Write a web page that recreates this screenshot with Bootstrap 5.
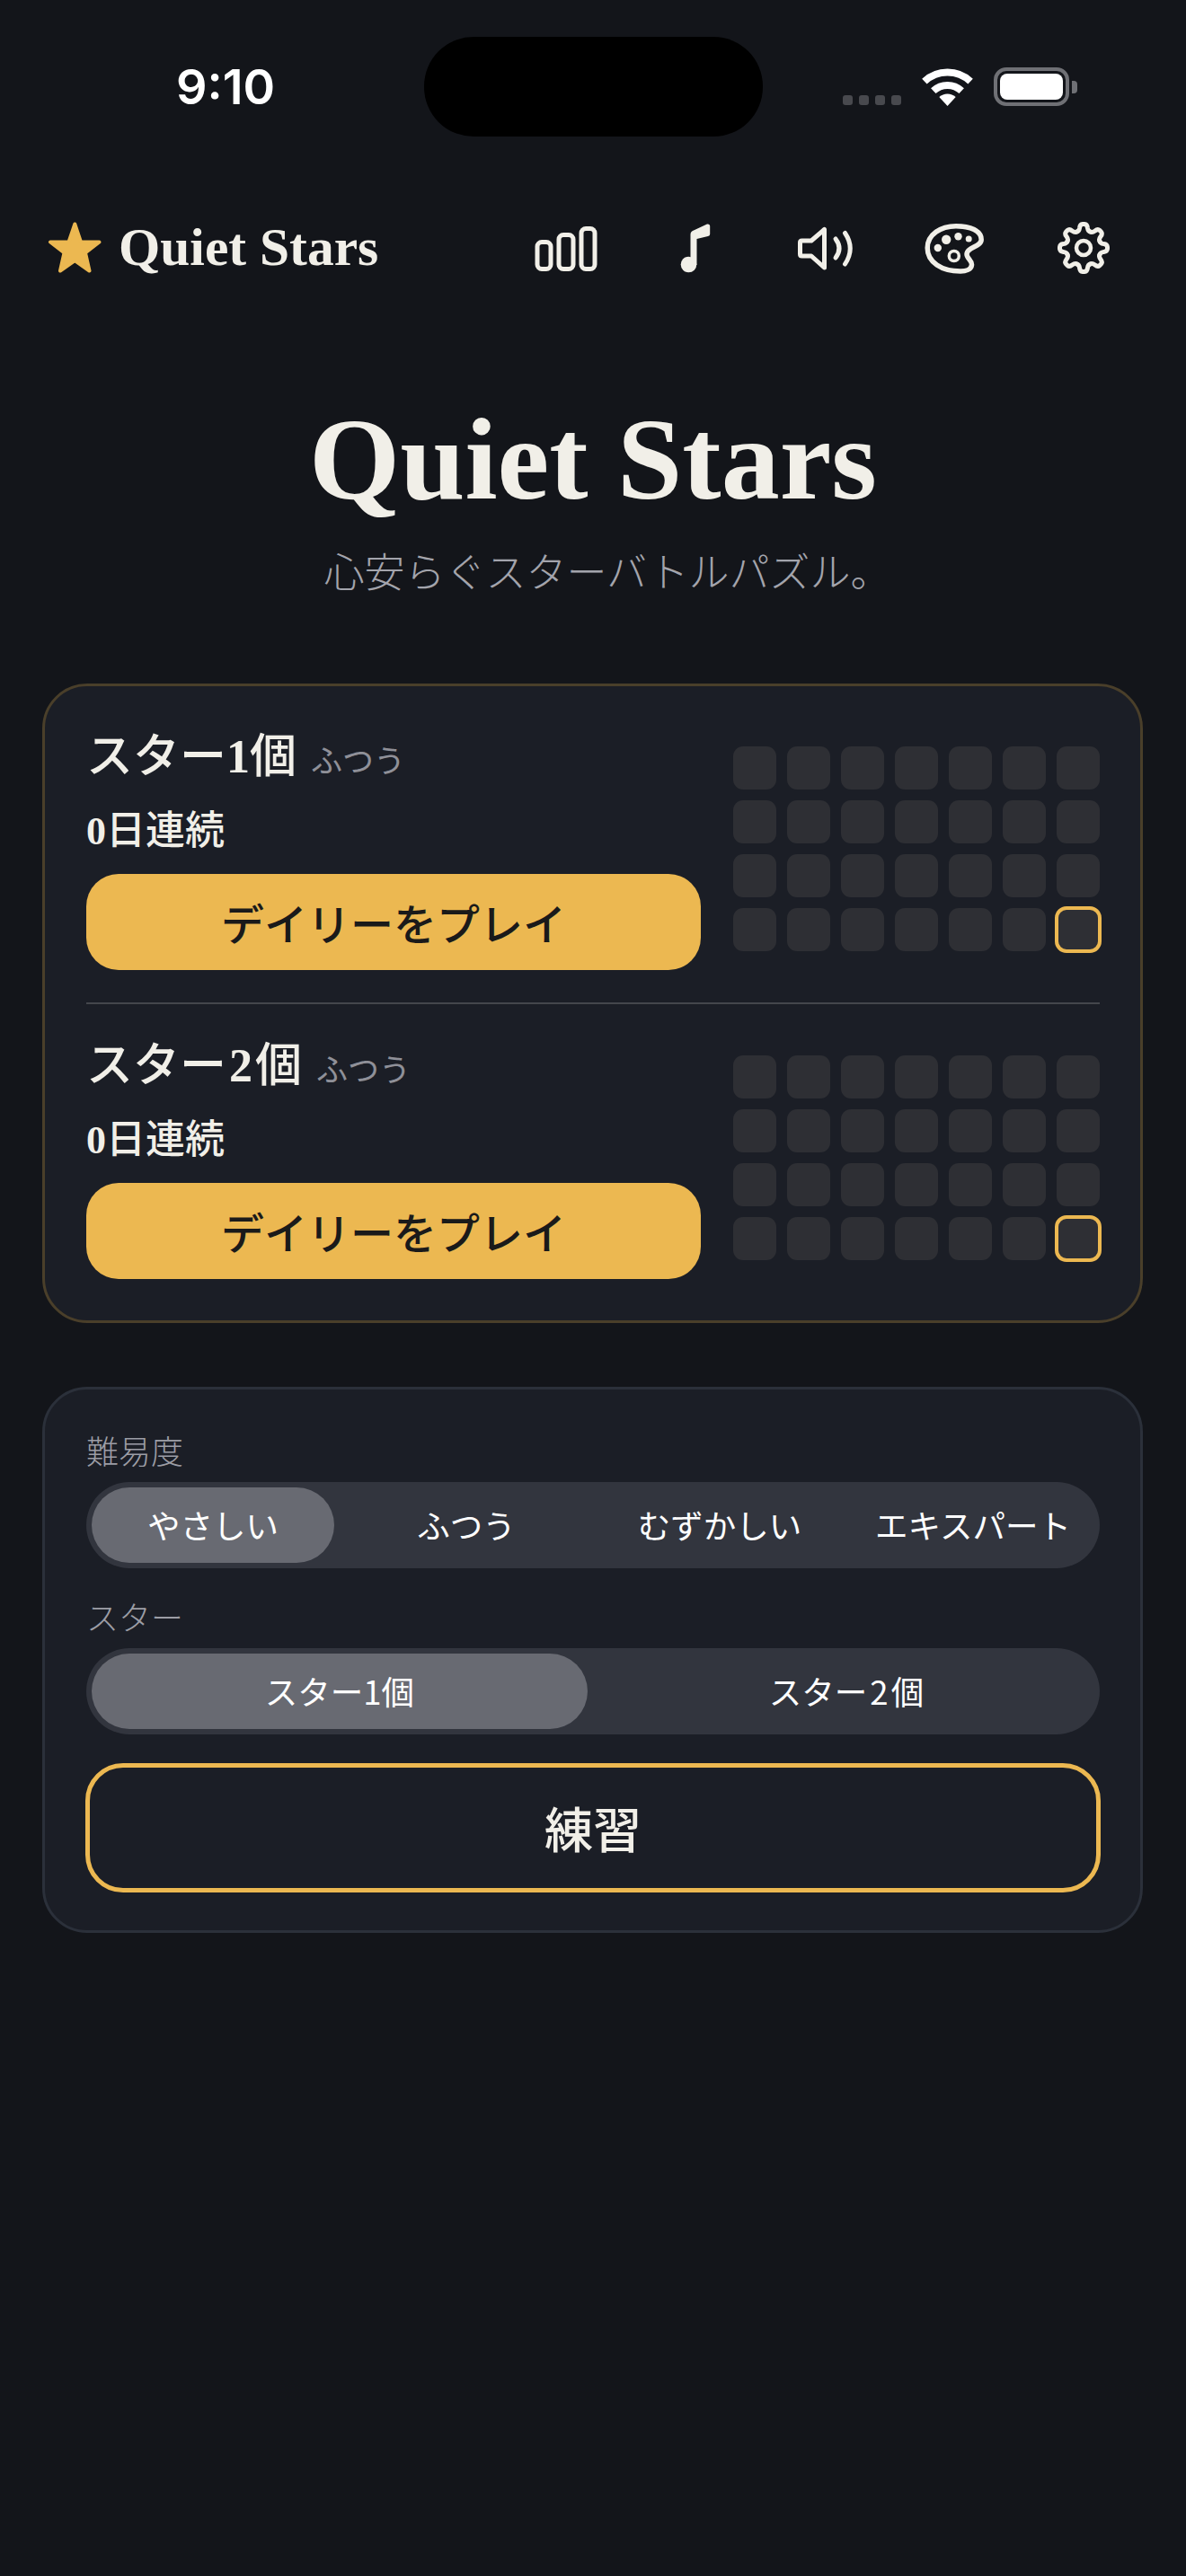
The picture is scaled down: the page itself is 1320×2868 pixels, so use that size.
<!DOCTYPE html>
<html lang="ja">
<head>
  <meta charset="UTF-8" />
  <meta name="viewport" content="width=device-width, initial-scale=1.0"/>
  <title>Quiet Stars</title>
  <link href="https://cdn.jsdelivr.net/npm/bootstrap@5.3.3/dist/css/bootstrap.min.css" rel="stylesheet">
  <style>
    body {
      background: #13151a;
      color: #f1efe8;
      font-family: "Noto Sans CJK JP", sans-serif;
      min-height: 100vh;
    }
    .serif { font-family: "Liberation Serif", "Noto Sans CJK JP", serif; }
    .num-bold { font-weight: 700; }
    .num-wide { margin: 0 3px; }

    /* status bar */
    .status-bar { display: grid; grid-template-columns: 1fr 377px 1fr; padding-top: 41px; }
    .clock { padding-left: 196px; font: 600 54px/1 Inter, sans-serif; color: #fff; }
    .island { height: 111px; background: #000; border-radius: 55px; }
    .status-right { padding-left: 89px; gap: 23px; }
    .sig-wrap { height: 43px; }
    .sig-dots { display: flex; gap: 7px; align-self: flex-end; padding-bottom: 1px; }
    .sig-dots i { width: 11px; height: 11px; border-radius: 3px; background: #48494e; }
    .batt-body { width: 84px; height: 43px; padding: 3px; border: 4px solid #6f7075; border-radius: 14px; }
    .batt-fill { height: 100%; background: #fff; border-radius: 8px; }
    .batt-cap { width: 6px; height: 14px; margin-left: 3px; background: #6f7075; border-radius: 0 4px 4px 0; }

    /* top bar */
    .top-bar { margin-top: 76px; height: 96px; padding: 0 66px 0 53px; }
    .brand { gap: 19px; font-size: 59.5px; font-weight: 700; line-height: 1; }
    .tool-row { gap: 48px; }
    .tool-btn { width: 96px; height: 96px; padding: 12px; border: 0; background: none; display: block; }
    .tool-btn svg { display: block; }

    /* hero */
    .hero { margin-top: 109px; }
    .hero-title { margin: 0; font-size: 130px; font-weight: 700; line-height: 156px; color: #f1efe8; }
    .hero-sub { margin: 16px 0 0; padding-left: 32px; font-size: 45px; font-weight: 300; line-height: 60px; color: #a3a4ac; }

    /* panels */
    .panel { margin: 0 48px 0 47px; padding: 46px 45px 46px 46px; background: #1b1e26; border: 3px solid #2b303a; border-radius: 50px; }
    .panel-daily { margin-top: 96px; border-color: #4a3f2a; }
    .panel-setup { margin-top: 71px; padding-bottom: 42px; }
    .daily-row { gap: 36px; height: 270px; }
    .daily-left { width: 684px; }
    .daily-title { height: 62px; margin-top: 2px; line-height: 62px; font-size: 52px; font-weight: 500; white-space: nowrap; }
    .daily-mode { margin-left: 3px; font-family: "Noto Sans CJK JP", sans-serif; font-size: 35px; font-weight: 400; color: #8f9098; }
    .daily-streak { margin-top: 24px; height: 56px; line-height: 56px; font-size: 44px; font-weight: 500; }
    .play-btn { display: block; width: 100%; height: 107px; margin-top: 19px; padding: 0; background: #ecb851; border: 0; border-radius: 36px; color: #1a1a1a; font-size: 48px; font-weight: 500; line-height: 97px; }
    .play-btn:hover { background: #ecb851; color: #1a1a1a; }
    .day-grid { display: grid; grid-template-columns: repeat(7, 48px); grid-auto-rows: 48px; gap: 12px; }
    .day-cell { background: #2e2f34; border-radius: 11px; }
    .day-cell.today { outline: 4px solid #ecb851; outline-offset: -2px; }
    .row-rule { height: 2px; margin: 36px 0; background: #44464c; opacity: 1; border: 0; }

    .field-label { height: 45px; margin: 0 0 12px; line-height: 42px; font-size: 36px; font-weight: 300; color: #9c9da5; }
    .seg-group { display: flex; gap: 12px; height: 96px; padding: 6px; margin-bottom: 32px; background: #32353e; border-radius: 48px; }
    .seg-btn { flex: 1 1 0; padding: 0; border: 0; border-radius: 42px; background: transparent; color: #fff; font-size: 36.5px; line-height: 80px; white-space: nowrap; }
    .seg-btn.on { background: #686a72; }
    .seg-btn:hover, .seg-btn:active { color: #fff; }
    .practice-btn { display: block; width: calc(100% + 2px); height: 144px; margin-left: -1px; padding: 0; background: transparent; border: 5px solid #ecb851; border-radius: 42px; color: #f1efe8; font-size: 54px; font-weight: 500; line-height: 124px; }
    .practice-btn:hover { background: transparent; border-color: #ecb851; color: #f1efe8; }
  </style>
</head>
<body>

<!-- status bar -->
<div class="status-bar">
  <div class="clock d-flex align-items-center">9:10</div>
  <div class="island"></div>
  <div class="status-right d-flex align-items-center">
    <div class="sig-wrap d-flex"><div class="sig-dots"><i></i><i></i><i></i><i></i></div></div>
    <svg width="57" height="42" viewBox="0 0 57 42" fill="none" stroke="#fff" stroke-width="8">
      <path d="M2.9 14.6A37.5 37.5 0 0 1 54.1 14.6"/>
      <path d="M12.8 25.2A23 23 0 0 1 44.2 25.2"/>
      <path d="M28.5 42L19.3 32.1A13.5 13.5 0 0 1 37.7 32.1Z" fill="#fff" stroke="none"/>
    </svg>
    <div class="d-flex align-items-center">
      <div class="batt-body"><div class="batt-fill"></div></div>
      <div class="batt-cap"></div>
    </div>
  </div>
</div>

<!-- top bar -->
<div class="top-bar d-flex align-items-center justify-content-between">
  <div class="brand serif d-flex align-items-center">
    <svg width="60" height="58" viewBox="0 0 60 58" fill="#ecb851" stroke="#ecb851" stroke-width="4" stroke-linejoin="round">
      <path d="M30.3 2.5L37 22.5 57.5 22.5 42 34.5 46.5 54.5 30.3 43 14 54.5 18.5 34.5 3 22.5 23.5 22.5Z"/>
    </svg>
    <span>Quiet Stars</span>
  </div>
  <div class="tool-row d-flex">
    <button class="tool-btn" type="button" aria-label="統計">
      <svg width="72" height="72" viewBox="0 0 72 72" fill="none" stroke="#f1efe8" stroke-width="5">
        <rect x="4" y="29.5" width="15" height="30" rx="5"/>
        <rect x="28" y="21.5" width="16" height="38" rx="5"/>
        <rect x="53" y="14.5" width="15" height="45" rx="5"/>
      </svg>
    </button>
    <button class="tool-btn" type="button" aria-label="音楽">
      <svg width="72" height="72" viewBox="0 0 72 72" fill="#f1efe8">
        <path d="M30.5 54V21Q30.5 17.5 34 16.5L49 9.5Q52.2 9 52.2 12V20.5Q52.2 22.5 50 23L37.5 26V55Z"/>
        <circle cx="28.5" cy="54.5" r="8.8"/>
      </svg>
    </button>
    <button class="tool-btn" type="button" aria-label="効果音">
      <svg width="72" height="72" viewBox="0 0 72 72" fill="none" stroke="#f1efe8" stroke-width="5" stroke-linejoin="round" stroke-linecap="round">
        <path d="M8.5 30Q8.5 28 10.5 28H21L35.5 15.5V58L21 45H10.5Q8.5 45 8.5 43Z"/>
        <path d="M48 26Q56 36.5 48 47"/>
        <path d="M58.5 19.5Q70 36.5 58.5 54"/>
      </svg>
    </button>
    <button class="tool-btn" type="button" aria-label="テーマ">
      <svg width="72" height="72" viewBox="0 0 72 72" fill="none" stroke="#f1efe8">
        <path stroke-width="5.5" d="M6.2 36C6.2 21 21 11.7 38 11.7C54 11.7 66.2 17 66.2 26.7C66.2 35 50 35 50 43C50 48 56 50 55.5 55C55 60 49 62 43 62C22 62 6.2 52 6.2 36Z"/>
        <circle cx="35.8" cy="45" r="5.5" stroke-width="3.5"/>
        <g fill="#f1efe8" stroke="none">
          <circle cx="27.2" cy="26.7" r="5.2"/>
          <circle cx="40.5" cy="23.3" r="4.2"/>
          <circle cx="52.2" cy="26" r="3.5"/>
          <circle cx="17.8" cy="36" r="4.2"/>
        </g>
      </svg>
    </button>
    <button class="tool-btn" type="button" aria-label="設定">
      <svg width="72" height="72" viewBox="0 0 72 72" fill="none" stroke="#f1efe8" stroke-width="5" stroke-linecap="round">
        <defs><path id="gearTooth" d="M28.54 18Q31 17.5 31.6 13.5Q32 9.8 35 9.5H37Q40 9.8 40.4 13.5Q41 17.5 43.46 18"/></defs>
        <use href="#gearTooth"/>
        <use href="#gearTooth" transform="rotate(45 36 36)"/>
        <use href="#gearTooth" transform="rotate(90 36 36)"/>
        <use href="#gearTooth" transform="rotate(135 36 36)"/>
        <use href="#gearTooth" transform="rotate(180 36 36)"/>
        <use href="#gearTooth" transform="rotate(225 36 36)"/>
        <use href="#gearTooth" transform="rotate(270 36 36)"/>
        <use href="#gearTooth" transform="rotate(315 36 36)"/>
        <circle cx="36" cy="36" r="8" stroke-width="4.5"/>
      </svg>
    </button>
  </div>
</div>

<!-- hero -->
<div class="hero text-center">
  <h1 class="hero-title serif">Quiet Stars</h1>
  <p class="hero-sub">心安らぐスターバトルパズル。</p>
</div>

<!-- daily -->
<div class="panel panel-daily">
  <div class="daily-row d-flex align-items-center">
    <div class="daily-left">
      <div class="daily-title serif">スター<span class="num-bold">1</span>個 <span class="daily-mode">ふつう</span></div>
      <div class="daily-streak serif"><span class="num-bold">0</span>日連続</div>
      <button class="btn play-btn" type="button">デイリーをプレイ</button>
    </div>
    <div class="day-grid"></div>
  </div>
  <hr class="row-rule">
  <div class="daily-row d-flex align-items-center">
    <div class="daily-left">
      <div class="daily-title serif">スター<span class="num-bold num-wide">2</span>個 <span class="daily-mode">ふつう</span></div>
      <div class="daily-streak serif"><span class="num-bold">0</span>日連続</div>
      <button class="btn play-btn" type="button">デイリーをプレイ</button>
    </div>
    <div class="day-grid"></div>
  </div>
</div>

<!-- practice setup -->
<div class="panel panel-setup">
  <p class="field-label">難易度</p>
  <div class="seg-group">
    <button class="btn seg-btn on" type="button">やさしい</button>
    <button class="btn seg-btn" type="button">ふつう</button>
    <button class="btn seg-btn" type="button">むずかしい</button>
    <button class="btn seg-btn" type="button">エキスパート</button>
  </div>
  <p class="field-label">スター</p>
  <div class="seg-group">
    <button class="btn seg-btn on" type="button">スター1個</button>
    <button class="btn seg-btn" type="button">スター<span class="num-wide">2</span>個</button>
  </div>
  <button class="btn practice-btn" type="button">練習</button>
</div>

<script>
document.querySelectorAll('.day-grid').forEach(grid => {
  for (let i = 0; i < 28; i++) {
    const cell = document.createElement('div');
    cell.className = i === 27 ? 'day-cell today' : 'day-cell';
    grid.appendChild(cell);
  }
});
</script>

<script src="https://cdn.jsdelivr.net/npm/bootstrap@5.3.3/dist/js/bootstrap.bundle.min.js"></script>
</body>
</html>
